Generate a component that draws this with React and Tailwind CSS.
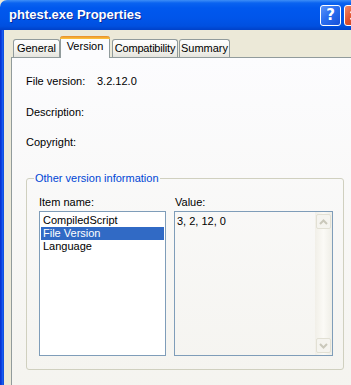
export default function App() {
  return (
    <div className="w-[351px] h-[385px] overflow-hidden bg-[#ece9d8] font-['Liberation_Sans',Arial,sans-serif] text-[11px] leading-[13px] text-black">
      {/* Title bar */}
      <div className="flex items-center h-[30px] w-[372px] rounded-tl-[7px] bg-[linear-gradient(to_bottom,#3d8ef7_0px,#0a63f0_3px,#0058ee_8px,#0055ea_18px,#0050e0_26px,#0041c8_30px)]">
        <div className="ml-[9px] flex-1 text-white font-bold text-[13px] leading-[16px] [text-shadow:1px_1px_0_#0a2a9a]">
          phtest.exe Properties
        </div>
        <div className="w-[21px] h-[21px] rounded-[3px] border border-white bg-[linear-gradient(135deg,#5b94f8,#2a6ef0_45%,#1650d8)] flex items-center justify-center text-white font-bold text-[15px] leading-[15px] font-['DejaVu_Sans',sans-serif]">
          ?
        </div>
        <div className="ml-[3px] mr-[7px] w-[21px] h-[21px] rounded-[3px] border border-white bg-[linear-gradient(135deg,#f08a6a,#e0522e_45%,#c63a18)] flex items-center justify-center">
          <svg width="11" height="11" viewBox="0 0 11 11">
            <path d="M1.5 1.5 L9.5 9.5 M9.5 1.5 L1.5 9.5" stroke="white" strokeWidth="2" />
          </svg>
        </div>
      </div>

      {/* Body */}
      <div className="flex h-[355px]">
        <div className="w-[4px] shrink-0 bg-[linear-gradient(to_right,#0a2fc8,#0a3fe0,#1a5ff0,#0a48d8)]" />
        <div className="pl-[7px] pt-[6px]">
          {/* Tabs */}
          <div className="flex items-end h-[21px] ml-[2px]">
            <div className="w-[47px] h-[18px] border border-b-0 border-[#919b9c] rounded-t-[3px] bg-[linear-gradient(to_bottom,#ffffff,#f3f3ef_60%,#e5e4dd)] text-center pt-[2px]">
              General
            </div>
            <div className="relative z-10 w-[50px] h-[22px] -mb-[1px] border-x border-[#919b9c] rounded-t-[3px] bg-[#fcfcfe] text-center">
              <div className="h-[3px] rounded-t-[3px] bg-[linear-gradient(to_bottom,#e68b2c,#ffc73c)] -mx-[1px]" />
              <div className="pt-[1px]">Version</div>
            </div>
            <div className="ml-[2px] w-[66px] h-[18px] border border-b-0 border-[#919b9c] rounded-t-[3px] bg-[linear-gradient(to_bottom,#ffffff,#f3f3ef_60%,#e5e4dd)] text-center pt-[2px] tracking-[-0.2px]">
              Compatibility
            </div>
            <div className="ml-[1px] w-[51px] h-[18px] border border-b-0 border-[#919b9c] rounded-t-[3px] bg-[linear-gradient(to_bottom,#ffffff,#f3f3ef_60%,#e5e4dd)] text-center pt-[2px]">
              Summary
            </div>
          </div>

          {/* Panel */}
          <div className="w-[360px] h-[400px] border border-[#919b9c] bg-[linear-gradient(to_bottom,#fcfcfe,#f4f3ee_90%)] pt-[17px] pl-[14px]">
            <div className="flex">
              <div className="w-[71px]">File version:</div>
              <div>3.2.12.0</div>
            </div>
            <div className="mt-[18px]">Description:</div>
            <div className="mt-[17px]">Copyright:</div>

            <fieldset className="mt-[23px] w-[318px] border border-[#d0d0bf] rounded-[3px] p-0">
              <legend className="ml-[7px] px-[1px] text-[#0046d5]">Other version information</legend>
              <div className="flex gap-[8px] pl-[12px] pt-[11px] pb-[13px]">
                <div className="w-[127px]">
                  <div>Item name:</div>
                  <div className="mt-[2px] h-[145px] border border-[#7f9db9] bg-white p-[1px] pt-[2px]">
                    <div className="h-[13px] px-[2px]">CompiledScript</div>
                    <div className="h-[13px] px-[2px] bg-[#316ac5] text-white">File Version</div>
                    <div className="h-[13px] px-[2px]">Language</div>
                  </div>
                </div>
                <div className="w-[159px]">
                  <div className="ml-[1px]">Value:</div>
                  <div className="mt-[2px] h-[145px] border border-[#7f9db9] flex">
                    <div className="flex-1 pl-[2px] pt-[3px]">3, 2, 12, 0</div>
                    <div className="w-[17px] flex flex-col justify-between py-[2px] bg-[linear-gradient(to_right,#f1efe8,#fbfaf6_50%,#efeee7)]">
                      <div className="mx-[1px] h-[15px] border border-[#e2e0d4] rounded-[2px] bg-[#f5f4ef] flex items-center justify-center">
                        <svg width="9" height="6" viewBox="0 0 9 6">
                          <path d="M1 5 L4.5 1.5 L8 5" stroke="#cac8bb" strokeWidth="2" fill="none" />
                        </svg>
                      </div>
                      <div className="mx-[1px] h-[15px] border border-[#e2e0d4] rounded-[2px] bg-[#f5f4ef] flex items-center justify-center">
                        <svg width="9" height="6" viewBox="0 0 9 6">
                          <path d="M1 1 L4.5 4.5 L8 1" stroke="#cac8bb" strokeWidth="2" fill="none" />
                        </svg>
                      </div>
                    </div>
                  </div>
                </div>
              </div>
            </fieldset>
          </div>
        </div>
      </div>
    </div>
  );
}
